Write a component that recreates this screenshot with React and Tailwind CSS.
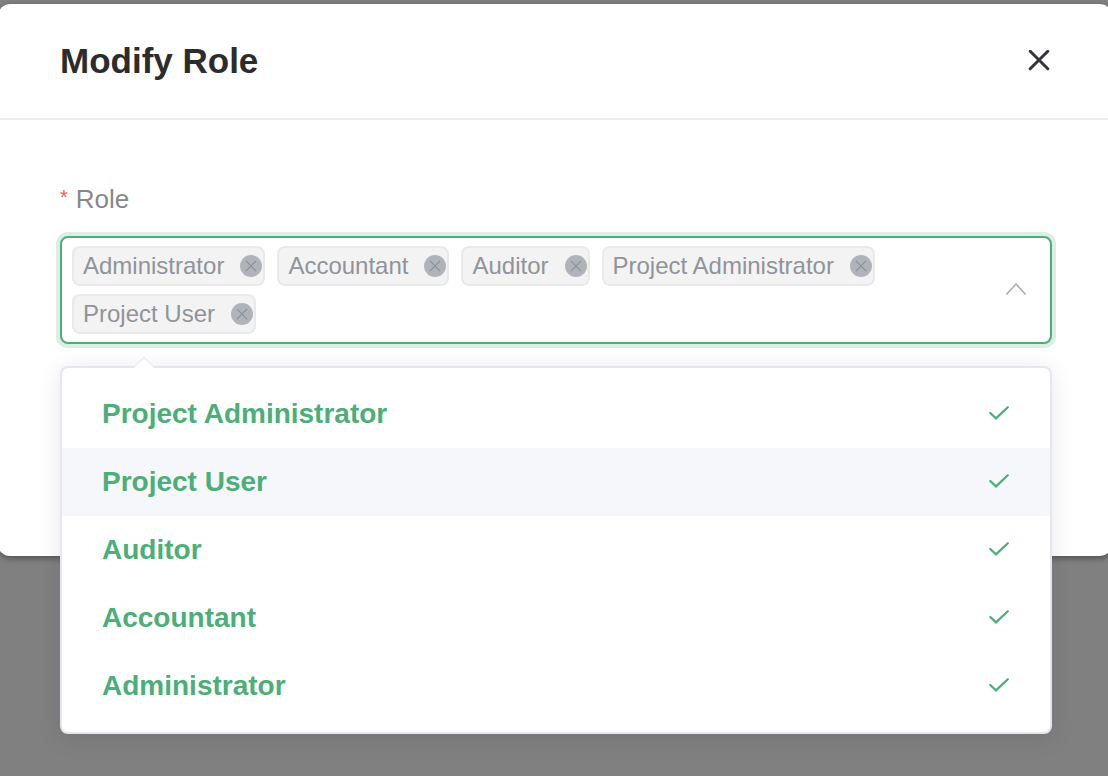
import React, { useState } from 'react';

const OPTIONS = ['Project Administrator', 'Project User', 'Auditor', 'Accountant', 'Administrator'];
const INITIAL = ['Administrator', 'Accountant', 'Auditor', 'Project Administrator', 'Project User'];

function CloseIcon() {
  return (
    <svg width="22" height="22" viewBox="0 0 22 22" fill="none" stroke="#33363d" strokeWidth="3" strokeLinecap="round" aria-hidden="true">
      <path d="M2.2 1.2 19.8 18.8M19.8 1.2 2.2 18.8" />
    </svg>
  );
}

function CheckIcon() {
  return (
    <svg width="20" height="16" viewBox="0 0 20 16" fill="none" stroke="#4cae78" strokeWidth="2.2" strokeLinecap="round" aria-hidden="true">
      <path d="M1.3 7 7 12.4 18.8 1.2" />
    </svg>
  );
}

function Tag({ label, onRemove }) {
  return (
    <span className="flex h-10 items-center rounded-lg border-2 border-[#e9e9eb] bg-[#f3f3f3] pl-[9px] pr-px text-[24px] leading-9 text-[#909399]">
      {label}
      <button type="button" onClick={onRemove} aria-label={`Remove ${label}`} className="ml-4 rounded-full">
        <svg width="22" height="22" viewBox="0 0 22 22" fill="none" aria-hidden="true">
          <circle cx="11" cy="11" r="11" fill="#b0b4ba" />
          <path d="M6.2 6.2 15.8 15.8M15.8 6.2 6.2 15.8" stroke="#8b8f95" strokeWidth="1.1" strokeLinecap="round" />
        </svg>
      </button>
    </span>
  );
}

function RoleSelect() {
  const [selected, setSelected] = useState(INITIAL);
  const [open, setOpen] = useState(true);
  const [hovered, setHovered] = useState('Project User');

  const toggle = role =>
    setSelected(s => (s.includes(role) ? s.filter(r => r !== role) : [...s, role]));

  return (
    <div className="relative">
      <div className="flex items-center rounded-lg border-2 border-[#4cae78] bg-white ring-4 ring-[#dbefe4]">
        <div className="flex flex-1 flex-wrap gap-x-3 gap-y-2 px-[10px] py-2">
          {selected.map(role => (
            <Tag key={role} label={role} onRemove={() => toggle(role)} />
          ))}
          <input
            id="role"
            type="text"
            role="combobox"
            aria-expanded={open}
            aria-controls="role-options"
            autoComplete="off"
            className="h-10 w-28 flex-1 bg-transparent text-[24px] text-[#909399] outline-none"
          />
        </div>
        <button type="button" onClick={() => setOpen(!open)} aria-label="Toggle role list" className="mr-6 flex-shrink-0">
          <svg width="20" height="14" viewBox="0 0 20 14" fill="none" stroke="#b0b1b5" strokeWidth="1.8" strokeLinecap="round" strokeLinejoin="round" aria-hidden="true">
            <path d="M.9 11 10 1 19.1 11" />
          </svg>
        </button>
      </div>

      {/* Dropdown */}
      {open && (
        <div className="absolute inset-x-0 top-full z-10 mt-[22px] rounded-lg border-2 border-[#e4e7ed] bg-white py-3 shadow-[0_4px_24px_rgba(0,0,0,0.1)]">
          <svg className="absolute -top-3 left-[70px]" width="24" height="13" viewBox="0 0 24 13" aria-hidden="true">
            <path d="M1 13 12 1.6 23 13Z" fill="#fff" />
            <path d="M2 11 12 1.4 22 11" fill="none" stroke="#ebeef5" strokeWidth="1.6" />
          </svg>
          <div id="role-options" role="listbox" aria-label="Role" aria-multiselectable="true">
            {OPTIONS.map(role => {
              const active = selected.includes(role);
              return (
                <button
                  key={role}
                  type="button"
                  role="option"
                  aria-selected={active}
                  onClick={() => toggle(role)}
                  onMouseEnter={() => setHovered(role)}
                  className={`flex h-[68px] w-full items-center justify-between pl-10 pr-[41px] text-left text-[28px] ${hovered === role ? 'bg-[#f5f7fa]' : ''} ${active ? 'font-bold text-[#4cae78]' : 'text-[#606266]'}`}
                >
                  {role}
                  {active && <CheckIcon />}
                </button>
              );
            })}
          </div>
        </div>
      )}
    </div>
  );
}

export default function App() {
  return (
    <div className="min-h-screen overflow-hidden bg-[#808080] pt-1 font-['Liberation_Sans',Arial,sans-serif]">
      <div role="dialog" aria-labelledby="dialog-title" className="-ml-0.5 -mr-1 rounded-xl bg-white shadow-[0_2px_6px_rgba(0,0,0,0.4)]">
        <div className="flex h-[116px] items-center justify-between border-b-2 border-[#e9edf1] pl-[62px] pr-[60px]">
          <h1 id="dialog-title" className="text-[35px] font-bold text-[#2c2c2c]">Modify Role</h1>
          <button type="button" aria-label="Close" className="mr-0.5">
            <CloseIcon />
          </button>
        </div>

        <form className="pt-[59px] pr-[60px] pb-[212px] pl-[62px]" onSubmit={e => e.preventDefault()}>
          <label htmlFor="role" className="mb-[17px] flex h-10 items-center gap-2 text-[26px] text-[#888888]">
            <span className="self-start text-[20px] leading-9 text-[#e8643c]">*</span>
            Role
          </label>
          <RoleSelect />
        </form>
      </div>
    </div>
  );
}
